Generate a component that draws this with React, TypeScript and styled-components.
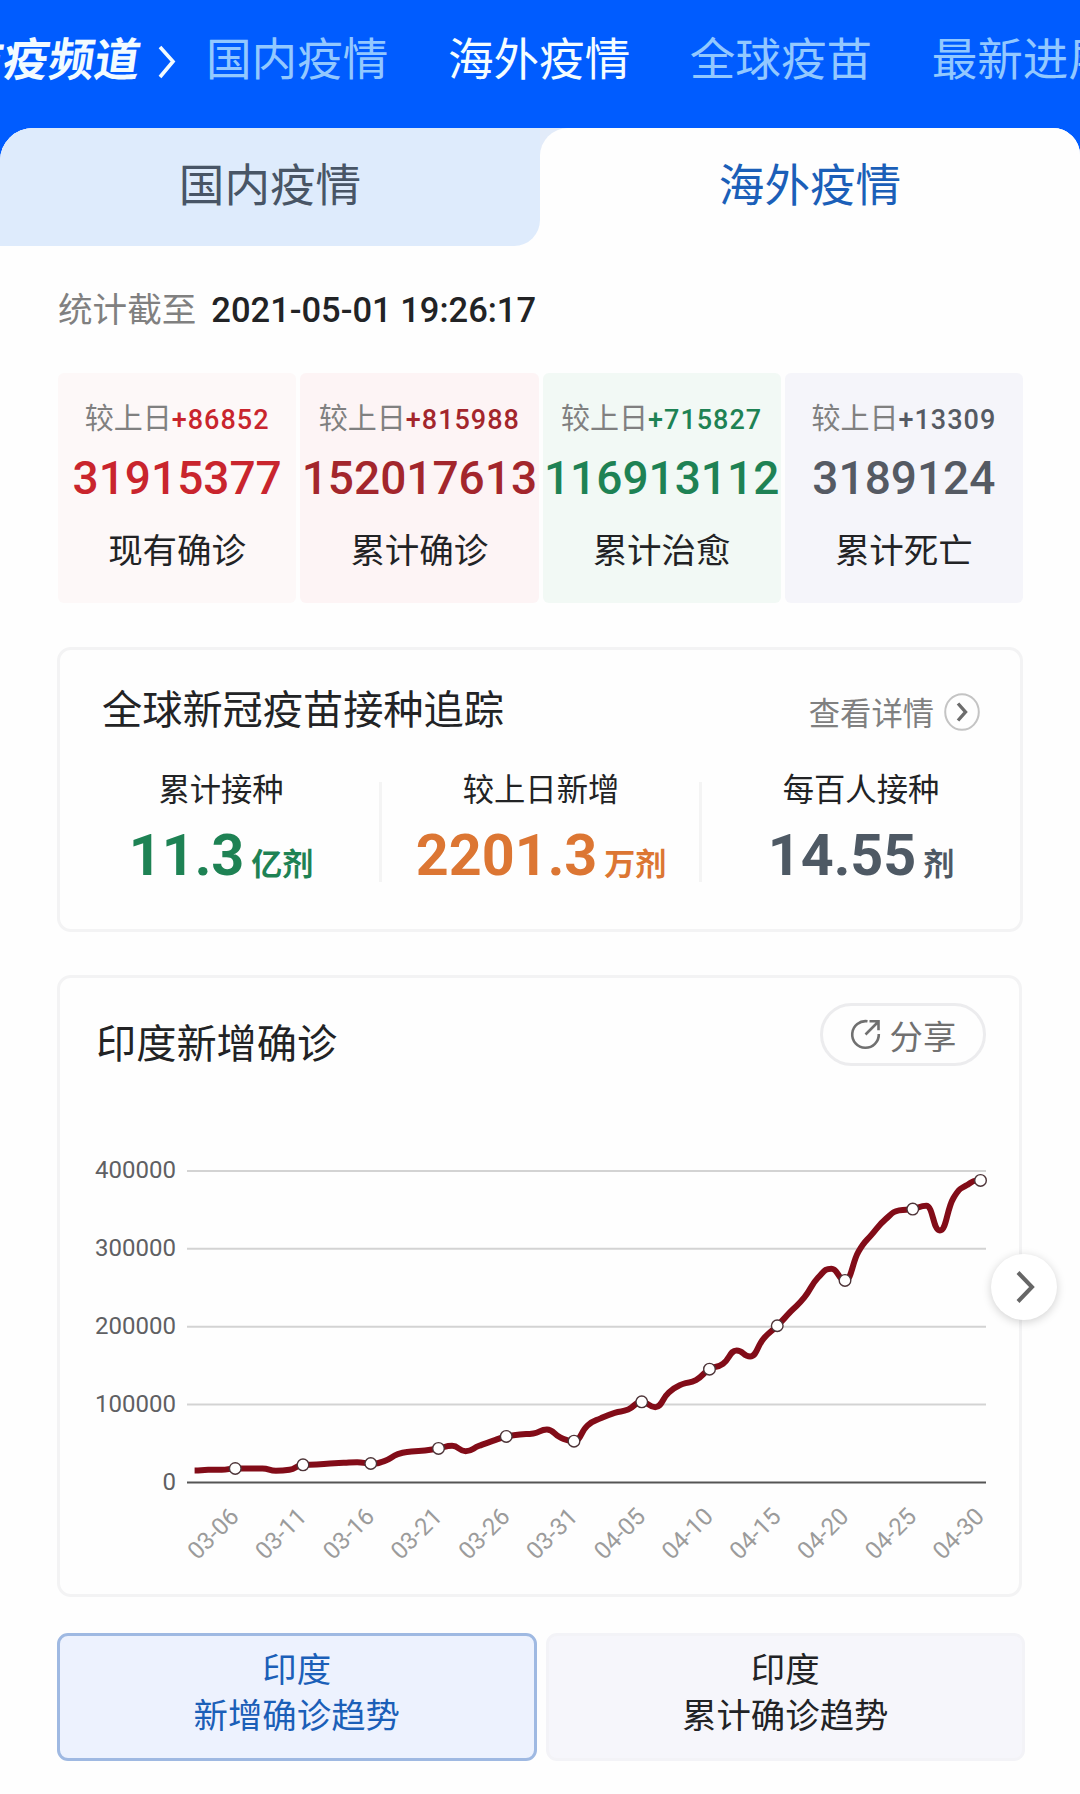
import React, { HTMLAttributes } from 'react'
import styled, { createGlobalStyle, ThemeProvider } from 'styled-components'

const theme = {
  fonts: {
    body: `Roboto, 'Noto Sans CJK SC', sans-serif`,
    cjk: `'Noto Sans CJK SC', sans-serif`
  },
  colors: {
    primary: '#005cff',
    link: '#1b5fb8',
    text: '#222325',
    muted: '#808080',
    border: '#f3f3f4',
    red: '#c9252d',
    darkRed: '#a3262c',
    green: '#1e8254',
    orange: '#dc7633',
    slate: '#4e5964',
    grey: '#555a63',
    line: '#820c18'
  }
}

const { fonts, colors } = theme

const GlobalStyle = createGlobalStyle`
  * {
    box-sizing: border-box;
  }

  body {
    margin: 0;
    background: #fefefe;
    color: ${colors.text};
    font-family: ${fonts.cjk};
    overflow: hidden;
  }

  button {
    font: inherit;
    padding: 0;
  }
`

const Page = styled.div`
  width: 1080px;
  height: 1794px;
  overflow: hidden;
  background: ${colors.primary};
`

const NavBar = styled.nav`
  display: flex;
  align-items: center;
  height: 128px;
  padding-bottom: 17px;
  white-space: nowrap;
  overflow: hidden;
`

const Brand = styled.div`
  display: flex;
  flex: none;
  justify-content: flex-end;
  width: 141px;
  color: #f2fbff;
  font-size: 45.6px;
  font-weight: 700;
  line-height: 60px;
  transform: skewX(-8deg);
`

const BrandArrow = styled.svg`
  flex: none;
  width: 22px;
  height: 36px;
  margin: 13px 28px 0 15px;
`

const NavList = styled.div`
  display: flex;
  gap: 59.5px;
`

const NavItem = styled.span<{ $active?: boolean }>`
  color: ${({ $active }) => ($active ? '#f4fdff' : '#92c8ff')};
  font-size: 45.6px;
  line-height: 60px;
`

const Panel = styled.main`
  height: 1666px;
  border-radius: 33px 27px 0 0;
  background: #fefefe;
  overflow: hidden;
`

const TabBar = styled.div`
  display: flex;
  height: 118px;
  background: linear-gradient(#e2ebf9 50%, #fefefe 50%);
`

const Tab = styled.div<{ $active?: boolean }>`
  flex: 1;
  color: ${({ $active }) => ($active ? colors.link : '#485566')};
  background: ${({ $active }) => ($active ? '#fefefe' : '#deebfc')};
  border-radius: ${({ $active }) => ($active ? '28px 0 0 0' : '0 0 26px 0')};
  font-size: 45.6px;
  line-height: 109px;
  text-align: center;
`

const Content = styled.div`
  padding: 0 57px;
`

const Updated = styled.p`
  display: flex;
  align-items: baseline;
  gap: 15px;
  height: 127px;
  margin: 0 0 0 1px;
  color: ${colors.muted};
  font-size: 34.6px;
  line-height: 122px;
`

const UpdatedTime = styled.time`
  color: ${colors.text};
  font-family: ${fonts.body};
  font-size: 34.5px;
  font-weight: 500;
`

const StatRow = styled.section`
  display: flex;
  gap: 4px;
  padding: 0 0 0 1px;
`

const StatCard = styled.div<{ $background: string }>`
  display: flex;
  flex: 1 1 0;
  flex-direction: column;
  align-items: center;
  min-width: 0;
  height: 230px;
  padding-top: 23px;
  border-radius: 6px;
  background: ${({ $background }) => $background};
  white-space: nowrap;
`

const StatChange = styled.div`
  color: ${colors.muted};
  font-size: 29px;
  line-height: 40px;
`

const StatDiff = styled.span<{ $color: string }>`
  color: ${({ $color }) => $color};
  font-family: ${fonts.body};
  font-size: 27px;
  font-weight: 500;
  letter-spacing: 1px;
`

const StatValue = styled.div<{ $color: string }>`
  margin-top: 8px;
  color: ${({ $color }) => $color};
  font-family: ${fonts.body};
  font-size: 46px;
  font-weight: 500;
  line-height: 60px;
`

const StatLabel = styled.div`
  margin-top: 15px;
  font-size: 34.5px;
  line-height: 50px;
`

const Card = styled.section`
  position: relative;
  border: 3px solid ${colors.border};
  border-radius: 14px;
  background: #fefefe;
`

const VaccineCard = styled(Card)`
  height: 285px;
  margin: 44px 0 43px;
  padding-top: 31px;
`

const CardHeader = styled.header`
  display: flex;
  align-items: center;
  justify-content: space-between;
`

const VaccineHeader = styled(CardHeader)`
  height: 52px;
  padding: 0 40px 0 42px;
`

const CardTitle = styled.h2`
  margin: 0;
  font-size: 40.2px;
  font-weight: 400;
  line-height: 52px;
`

const MoreLink = styled.div`
  display: flex;
  align-items: center;
  gap: 10px;
  margin-top: 9px;
  color: ${colors.muted};
  font-size: 31.3px;
  line-height: 44px;
`

const VaccineGrid = styled.div`
  display: grid;
  grid-template-columns: repeat(3, 1fr);
  margin: 22px -1px 0 1px;
`

const VaccineItem = styled.div`
  position: relative;
  display: flex;
  flex-direction: column;
  align-items: center;

  & + &::before {
    content: '';
    position: absolute;
    top: 27px;
    left: -2px;
    width: 3px;
    height: 100px;
    background: #f4f4f4;
  }
`

const VaccineLabel = styled.div`
  font-size: 31.3px;
  line-height: 66px;
`

const VaccineValue = styled.div<{ $color: string }>`
  display: flex;
  align-items: baseline;
  gap: 7px;
  margin-top: 2px;
  color: ${({ $color }) => $color};
  font-family: ${fonts.body};
  font-size: 57.5px;
  font-weight: 700;
  line-height: 66px;
`

const VaccineUnit = styled.span`
  font-family: ${fonts.cjk};
  font-size: 31px;
  font-weight: 700;
`

const ChartCard = styled(Card)`
  width: 965px;
  height: 622px;
`

const ChartHeader = styled(CardHeader)`
  height: 113px;
  padding: 0 33px 0 36px;
`

const ChartTitle = styled(CardTitle)`
  margin-top: 12px;
`

const ShareButton = styled.button`
  display: flex;
  align-items: center;
  justify-content: center;
  gap: 9px;
  width: 166px;
  height: 63px;
  border: 3px solid #ececee;
  border-radius: 32px;
  background: #fefefe;
  color: #707070;
  font-size: 33.4px;
  line-height: 54px;
`

const ChartSvg = styled.svg`
  display: block;
  width: 958px;
  height: 420px;
  margin-top: 70px;
  overflow: hidden;
  font-family: ${fonts.body};
  font-size: 24px;
`

const NextButton = styled.button`
  position: absolute;
  top: 276px;
  right: -38px;
  display: flex;
  align-items: center;
  justify-content: center;
  width: 66px;
  height: 66px;
  border: 0;
  border-radius: 50%;
  background: #fff;
  box-shadow: 0 2px 10px rgba(0, 0, 0, 0.18);
`

const TrendRow = styled.div`
  display: flex;
  gap: 9px;
  width: 968px;
  margin-top: 36px;
`

const TrendButton = styled.button<{ $active?: boolean }>`
  flex: 1;
  height: 128px;
  padding-bottom: 13px;
  border: 3px solid ${({ $active }) => ($active ? '#9fb9e2' : '#f3f3f7')};
  border-radius: 11px;
  background: ${({ $active }) => ($active ? '#edf2fe' : '#f6f6fb')};
  color: ${({ $active }) => ($active ? colors.link : colors.text)};
  font-size: 34.4px;
  line-height: 45.5px;
`

interface StatPropsTypes {
  diff: string,
  value: string,
  label: string,
  color: string,
  background: string
}

const stats: StatPropsTypes[] = [
  { diff: '+86852', value: '31915377', label: '现有确诊', color: colors.red, background: '#fdf8f8' },
  { diff: '+815988', value: '152017613', label: '累计确诊', color: colors.darkRed, background: '#fdf4f5' },
  { diff: '+715827', value: '116913112', label: '累计治愈', color: colors.green, background: '#f2f9f5' },
  { diff: '+13309', value: '3189124', label: '累计死亡', color: colors.grey, background: '#f5f5fa' }
]

const vaccines = [
  { label: '累计接种', value: '11.3', unit: '亿剂', color: colors.green },
  { label: '较上日新增', value: '2201.3', unit: '万剂', color: colors.orange },
  { label: '每百人接种', value: '14.55', unit: '剂', color: colors.slate }
]

// Daily new cases in thousands, 03-03 to 04-30
const cases = [
  15.4, 16.3, 16.3, 18, 18, 18, 15, 16.3, 22.7, 23.1, 24.4, 25.3, 26.1, 24.4, 27.4,
  36.4, 39.8, 41.1, 43.7, 47.1, 40.2, 47.1, 53.5, 59.1, 61.6, 62.9, 68.1, 57.8, 53.1,
  73.2, 82.6, 89.5, 93.7, 103.6, 96.7, 115.6, 126.3, 131.4, 145.5, 152.4, 169.5, 161.8,
  184.9, 201.2, 219.6, 237.5, 262.8, 274.4, 259.4, 296.6, 318.9, 338.1, 349.3, 351,
  355.2, 323.6, 365.1, 381.8, 387.8
]

const dates = [
  '03-06', '03-11', '03-16', '03-21', '03-26', '03-31',
  '04-05', '04-10', '04-15', '04-20', '04-25', '04-30'
]

const ticks = [400, 300, 200, 100, 0]

const DAY = 13.55
const toX = (index: number) => 134.6 + index * DAY
const toY = (value: number) => 321.5 - value * 0.779

// Half-step handles with flat tangents at peaks and dips, so they stay round
const smoothPath = (values: number[]) => {
  const ys = values.map(toY)
  const slopes = ys.map((y, i) => {
    if (i === 0 || i === ys.length - 1) return 0
    const before = y - ys[i - 1]
    const after = ys[i + 1] - y
    if (before * after <= 0) return 0
    const limit = 2 * Math.min(Math.abs(before), Math.abs(after))
    const mean = (before + after) / 2
    return Math.sign(mean) * Math.min(Math.abs(mean), limit)
  })

  return ys.slice(1).reduce((path, y, i) => (
    `${path} C${toX(i) + DAY / 2},${ys[i] + slopes[i] / 2} ${toX(i + 1) - DAY / 2},${y - slopes[i + 1] / 2} ${toX(i + 1)},${y}`
  ), `M${toX(0)},${ys[0]}`)
}

const Stat = ({ diff, value, label, color, background }: StatPropsTypes) => (
  <StatCard $background={background}>
    <StatChange>
      较上日<StatDiff $color={color}>{diff}</StatDiff>
    </StatChange>
    <StatValue $color={color}>{value}</StatValue>
    <StatLabel>{label}</StatLabel>
  </StatCard>
)

const MoreIcon = () => (
  <svg width='36' height='38' viewBox='0 0 36 38' fill='none'>
    <ellipse cx='18' cy='19' rx='16.8' ry='17.8' stroke='#c4c4c4' strokeWidth='2' />
    <path d='M14 10.5l7.5 8.5-7.5 8.5' stroke='#6c6c6c' strokeWidth='3.4' />
  </svg>
)

const ShareIcon = () => (
  <svg width='31' height='31' viewBox='0 0 31 31' fill='none' stroke='#707070' strokeWidth='2.6'>
    <path d='M17.5 2.3A13.3 13.3 0 1 0 28.8 15' />
    <path d='M15.5 15.5L28 3M19.5 2.3h9v9' />
  </svg>
)

const CasesChart = () => (
  <ChartSvg viewBox='0 0 958 420'>
    {ticks.map(tick => (
      <g key={tick}>
        <line
          x1='127'
          x2='926'
          y1={toY(tick)}
          y2={toY(tick)}
          stroke={tick === 0 ? '#555' : '#d3d3d3'}
          strokeWidth='2'
        />
        <text x='116' y={toY(tick) + 7} textAnchor='end' fill='#5f6063'>{tick * 1000}</text>
      </g>
    ))}
    <path d={smoothPath(cases)} fill='none' stroke={colors.line} strokeWidth='6' strokeLinejoin='round' />
    {dates.map((date, i) => {
      const index = 3 + i * 5
      const x = toX(index)
      return (
        <g key={date}>
          <circle cx={x} cy={toY(cases[index])} r='5.8' fill='#fff' stroke='#4d3438' strokeWidth='1.4' />
          <text transform={`translate(${x + 5} 357) rotate(-45)`} textAnchor='end' fill='#9b9b9b'>{date}</text>
        </g>
      )
    })}
  </ChartSvg>
)

interface TrendPropsTypes extends HTMLAttributes<HTMLButtonElement> {
  title: string,
  active?: boolean
}

const Trend = ({ title, active = false, ...props }: TrendPropsTypes) => (
  <TrendButton $active={active} {...props}>
    印度<br />{title}
  </TrendButton>
)

const App = () => (
  <ThemeProvider theme={theme}>
    <GlobalStyle />
    <Page>
      <NavBar>
        <Brand>防疫频道</Brand>
        <BrandArrow viewBox='0 0 22 36' fill='none'>
          <path d='M4 3l13 14.5L4 33' stroke='#f2fbff' strokeWidth='3.6' />
        </BrandArrow>
        <NavList>
          <NavItem>国内疫情</NavItem>
          <NavItem $active>海外疫情</NavItem>
          <NavItem>全球疫苗</NavItem>
          <NavItem>最新进展</NavItem>
        </NavList>
      </NavBar>
      <Panel>
        <TabBar>
          <Tab>国内疫情</Tab>
          <Tab $active>海外疫情</Tab>
        </TabBar>
        <Content>
          <Updated>
            统计截至
            <UpdatedTime>2021-05-01 19:26:17</UpdatedTime>
          </Updated>
          <StatRow>
            {stats.map(stat => <Stat key={stat.label} {...stat} />)}
          </StatRow>
          <VaccineCard>
            <VaccineHeader>
              <CardTitle>全球新冠疫苗接种追踪</CardTitle>
              <MoreLink>
                查看详情
                <MoreIcon />
              </MoreLink>
            </VaccineHeader>
            <VaccineGrid>
              {vaccines.map(({ label, value, unit, color }) => (
                <VaccineItem key={label}>
                  <VaccineLabel>{label}</VaccineLabel>
                  <VaccineValue $color={color}>
                    {value}
                    <VaccineUnit>{unit}</VaccineUnit>
                  </VaccineValue>
                </VaccineItem>
              ))}
            </VaccineGrid>
          </VaccineCard>
          <ChartCard>
            <ChartHeader>
              <ChartTitle>印度新增确诊</ChartTitle>
              <ShareButton>
                <ShareIcon />
                分享
              </ShareButton>
            </ChartHeader>
            <CasesChart />
            <NextButton>
              <svg width='24' height='36' viewBox='0 0 24 36' fill='none'>
                <path d='M6 3.5L20 18 6 32.5' stroke='#666' strokeWidth='4' />
              </svg>
            </NextButton>
          </ChartCard>
          <TrendRow>
            <Trend title='新增确诊趋势' active />
            <Trend title='累计确诊趋势' />
          </TrendRow>
        </Content>
      </Panel>
    </Page>
  </ThemeProvider>
)

export default App
